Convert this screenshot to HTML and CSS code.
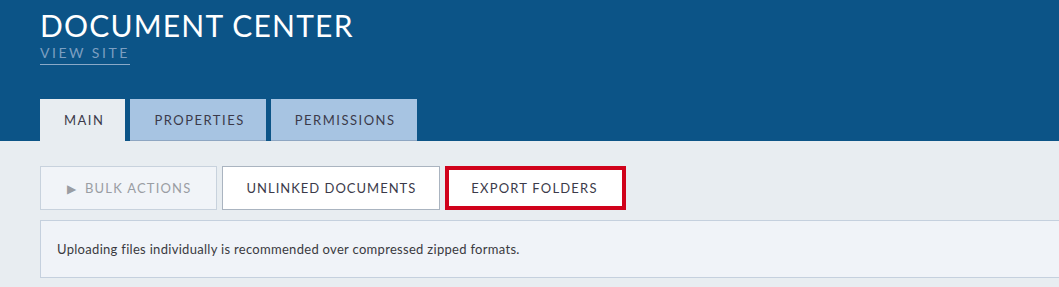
FILE: index.html
```html
<!DOCTYPE html>
<html lang="en">
<head>
  <meta charset="UTF-8" />
  <meta name="viewport" content="width=device-width, initial-scale=1.0"/>
  <title>Document Center</title>
  <link rel="stylesheet" href="styles.css">
</head>
<body>
  <header class="header">
    <h1>Document Center</h1>
    <a class="view-site" href="#">View Site</a>
    <nav class="tabs">
      <a class="tab active" href="#">Main</a>
      <a class="tab" href="#">Properties</a>
      <a class="tab" href="#">Permissions</a>
    </nav>
  </header>
  <main class="content">
    <div class="actions">
      <button class="btn disabled" type="button"><span class="caret">&#9654;</span>Bulk Actions</button>
      <button class="btn" type="button">Unlinked Documents</button>
      <button class="btn highlight" type="button">Export Folders</button>
    </div>
    <div class="notice">
      Uploading files individually is recommended over compressed zipped formats.
    </div>
  </main>
</body>
</html>
```

FILE: styles.css
```css
* {
  margin: 0;
  padding: 0;
  box-sizing: border-box;
  font-family: Lato, "Open Sans", sans-serif;
}

body {
  background: #e8edf1;
  color: #333;
  overflow: hidden;
}

.header {
  background: #0c5487;
  padding: 8px 0 0 40px;
  display: flex;
  flex-direction: column;
  align-items: flex-start;
}

h1 {
  color: #fff;
  font-weight: 400;
  font-size: 30px;
  line-height: 34px;
  letter-spacing: 1.2px;
  text-transform: uppercase;
}

.view-site {
  color: #7c9fc1;
  font-size: 14px;
  letter-spacing: 2.5px;
  line-height: 19px;
  margin-top: 1px;
  text-transform: uppercase;
  text-decoration: none;
  border-bottom: 1px solid #8aa9c8;
  padding-bottom: 2px;
}

.tabs {
  display: flex;
  gap: 5px;
  margin-top: 34px;
}

.tab {
  display: block;
  height: 42px;
  line-height: 42px;
  padding: 0 21px 0 24px;
  font-size: 13px;
  letter-spacing: 1.5px;
  text-transform: uppercase;
  text-decoration: none;
  color: #3b3a4a;
  background: #a7c4e2;
  border-bottom: 1px solid #8ea6c2;
}

.tab.active {
  background: #e8edf1;
  border-bottom-color: #e8edf1;
}

.content {
  padding: 25px 0 0 40px;
}

.actions {
  display: flex;
  gap: 5px;
}

.btn {
  height: 44px;
  padding: 0 23px 0 24px;
  font-size: 13px;
  letter-spacing: 1px;
  text-transform: uppercase;
  color: #3b3a4a;
  background: #fff;
  border: 1px solid #aab4c0;
  cursor: pointer;
}

.btn.disabled {
  color: #9a9da3;
  background: #f1f4f8;
  border-color: #c8d2dd;
  cursor: default;
  padding: 0 24px 0 26px;
  letter-spacing: 1.2px;
}

.caret {
  font-size: 12px;
  margin-right: 9px;
  vertical-align: 0;
  letter-spacing: 0;
}

.btn.highlight {
  border: 4px solid #d0021b;
  padding: 0 24px 0 22px;
  letter-spacing: 1.2px;
}

.notice {
  margin-top: 10px;
  height: 58px;
  line-height: 56px;
  padding-left: 16px;
  font-size: 13px;
  letter-spacing: 0.3px;
  color: #3a3a40;
  background: #f0f3f8;
  border: 1px solid #c5d0de;
  border-right: none;
}
```
